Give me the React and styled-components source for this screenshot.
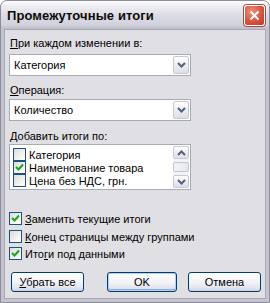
import React from 'react';
import styled, { createGlobalStyle } from 'styled-components';

const GlobalStyle = createGlobalStyle`
    body {
        margin: 0;
        background: #ffffff;
    }
`;

const Window = styled.div`
    width: 270px;
    height: 303px;
    box-sizing: border-box;
    display: flex;
    flex-direction: column;
    background: #c4c3d0;
    border: 1px solid #8d8c99;
    border-radius: 7px 7px 0 0;
    font-family: 'Liberation Sans', Arial, sans-serif;
    font-size: 11px;
    color: #000;
    overflow: hidden;
`;

const TitleBar = styled.div`
    height: 28px;
    flex: none;
    display: flex;
    align-items: center;
    justify-content: space-between;
    padding: 0 4px 0 6px;
    background: linear-gradient(
        to bottom,
        #ffffff 0%,
        #eeeef3 18%,
        #dcdce5 50%,
        #d2d2dd 85%,
        #bdbcca 100%
    );
`;

const Title = styled.span`
    font-family: 'Liberation Sans', Arial, sans-serif;
    font-weight: bold;
    font-size: 13px;
    color: #0c0c0c;
    letter-spacing: 0.1px;
`;

const CloseButton = styled.div`
    width: 21px;
    height: 21px;
    box-sizing: border-box;
    border: 1px solid #ffffff;
    border-radius: 3px;
    background: radial-gradient(circle at 35% 30%, #ef8f7e 0%, #d8553f 55%, #c2372a 100%);
    box-shadow: 0 0 0 1px #a94a44;
    display: flex;
    align-items: center;
    justify-content: center;
`;

const Client = styled.div`
    flex: 1;
    margin: 0 3px 3px 3px;
    background: #e0dfe3;
    border: 1px solid #a9a8b5;
    padding: 7px 4px 0 4px;
    display: flex;
    flex-direction: column;
`;

const Label = styled.div`
    line-height: 13px;
    height: 13px;
    margin-top: ${p => p.$mt || 0}px;
    padding-left: 1px;
    white-space: nowrap;
`;

const Key = styled.span`
    text-decoration: underline;
    text-underline-offset: 1px;
`;

const Combo = styled.div`
    width: 182px;
    height: 22px;
    box-sizing: border-box;
    margin-top: ${p => p.$mt || 0}px;
    border: 1px solid #a5acb5;
    background: #ffffff;
    display: flex;
    align-items: center;
    padding: 1px;
`;

const ComboText = styled.div`
    flex: 1;
    padding-left: 3px;
    line-height: 13px;
`;

const ArrowButton = styled.div`
    width: 16px;
    height: ${p => p.$h || 18}px;
    box-sizing: border-box;
    border: 1px solid #c8c8d4;
    border-radius: 2px;
    background: linear-gradient(to bottom, #ffffff 0%, #f0f0f4 40%, #dedee6 100%);
    display: flex;
    align-items: center;
    justify-content: center;
`;

const List = styled.div`
    width: 182px;
    height: 46px;
    box-sizing: border-box;
    margin-top: 1px;
    border: 1px solid #a5acb5;
    background: #ffffff;
    display: flex;
    padding: 1px;
`;

const ListItems = styled.div`
    flex: 1;
    display: flex;
    flex-direction: column;
    padding: 2px 0 0 2px;
`;

const ListRow = styled.div`
    height: 13px;
    display: flex;
    align-items: center;
    gap: 3px;
    white-space: nowrap;
`;

const ScrollBar = styled.div`
    width: 16px;
    display: flex;
    flex-direction: column;
    justify-content: space-between;
    background: #f4f4f7;
`;

const Thumb = styled.div`
    height: 10px;
    box-sizing: border-box;
    border: 1px solid #c4c4d0;
    border-radius: 2px;
    background: linear-gradient(to right, #f4f4f8, #e6e6ee);
`;

const CheckRow = styled.div`
    display: flex;
    align-items: center;
    gap: 3px;
    height: 13px;
    margin-top: ${p => p.$mt || 0}px;
    white-space: nowrap;
`;

const Box = styled.div`
    width: 13px;
    height: 13px;
    flex: none;
    box-sizing: border-box;
    border: 1px solid #1c5180;
    background: linear-gradient(135deg, #dcdcd7 0%, #f2f2ef 60%, #ffffff 100%);
    display: flex;
    align-items: center;
    justify-content: center;
`;

const ButtonRow = styled.div`
    display: flex;
    margin-top: 12px;
    padding-left: 2px;
`;

const Button = styled.div`
    width: ${p => p.$w}px;
    height: 20px;
    box-sizing: border-box;
    margin-left: ${p => p.$ml || 0}px;
    border: 1px solid #003c74;
    border-radius: 3px;
    background: linear-gradient(to bottom, #ffffff 0%, #f4f4f8 50%, #e2e2ec 85%, #cfcfdd 100%);
    box-shadow: ${p => (p.$default ? 'inset 0 0 0 1px #b8d0f0, inset 0 -1px 0 1px #89ade4' : 'none')};
    display: flex;
    align-items: center;
    justify-content: center;
`;

function Check({ on }) {
    return (
        <Box>
            {on && (
                <svg width="9" height="9" viewBox="0 0 9 9">
                    <path d="M1 4 L3.5 6.5 L8 1.5" fill="none" stroke="#21a121" strokeWidth="2" />
                </svg>
            )}
        </Box>
    );
}

function Chevron({ up }) {
    return (
        <svg width="9" height="6" viewBox="0 0 9 6">
            <path
                d={up ? 'M1 5 L4.5 1.5 L8 5' : 'M1 1 L4.5 4.5 L8 1'}
                fill="none"
                stroke="#4d6185"
                strokeWidth="2"
            />
        </svg>
    );
}

export default function App() {
    return (
        <>
            <GlobalStyle />
            <Window>
                <TitleBar>
                    <Title>Промежуточные итоги</Title>
                    <CloseButton>
                        <svg width="11" height="11" viewBox="0 0 11 11">
                            <path d="M1.5 1.5 L9.5 9.5 M9.5 1.5 L1.5 9.5" stroke="#fff" strokeWidth="2" />
                        </svg>
                    </CloseButton>
                </TitleBar>
                <Client>
                    <Label>
                        <Key>П</Key>ри каждом изменении в:
                    </Label>
                    <Combo $mt={4}>
                        <ComboText>Категория</ComboText>
                        <ArrowButton>
                            <Chevron />
                        </ArrowButton>
                    </Combo>
                    <Label $mt={8}>
                        <Key>О</Key>перация:
                    </Label>
                    <Combo $mt={2}>
                        <ComboText>Количество</ComboText>
                        <ArrowButton>
                            <Chevron />
                        </ArrowButton>
                    </Combo>
                    <Label $mt={9}>
                        <Key>Д</Key>обавить итоги по:
                    </Label>
                    <List>
                        <ListItems>
                            <ListRow>
                                <Check />
                                Категория
                            </ListRow>
                            <ListRow>
                                <Check on />
                                Наименование товара
                            </ListRow>
                            <ListRow>
                                <Check />
                                Цена без НДС, грн.
                            </ListRow>
                        </ListItems>
                        <ScrollBar>
                            <ArrowButton $h={13}>
                                <Chevron up />
                            </ArrowButton>
                            <Thumb />
                            <ArrowButton $h={13}>
                                <Chevron />
                            </ArrowButton>
                        </ScrollBar>
                    </List>
                    <CheckRow $mt={22}>
                        <Check on />
                        <span>
                            <Key>З</Key>аменить текущие итоги
                        </span>
                    </CheckRow>
                    <CheckRow $mt={5}>
                        <Check />
                        <span>
                            <Key>К</Key>онец страницы между группами
                        </span>
                    </CheckRow>
                    <CheckRow $mt={4}>
                        <Check on />
                        <span>
                            Ито<Key>г</Key>и под данными
                        </span>
                    </CheckRow>
                    <ButtonRow>
                        <Button $w={73}>
                            <span>
                                <Key>У</Key>брать все
                            </span>
                        </Button>
                        <Button $w={70} $ml={23} $default>
                            OK
                        </Button>
                        <Button $w={73} $ml={11}>
                            Отмена
                        </Button>
                    </ButtonRow>
                </Client>
            </Window>
        </>
    );
}
